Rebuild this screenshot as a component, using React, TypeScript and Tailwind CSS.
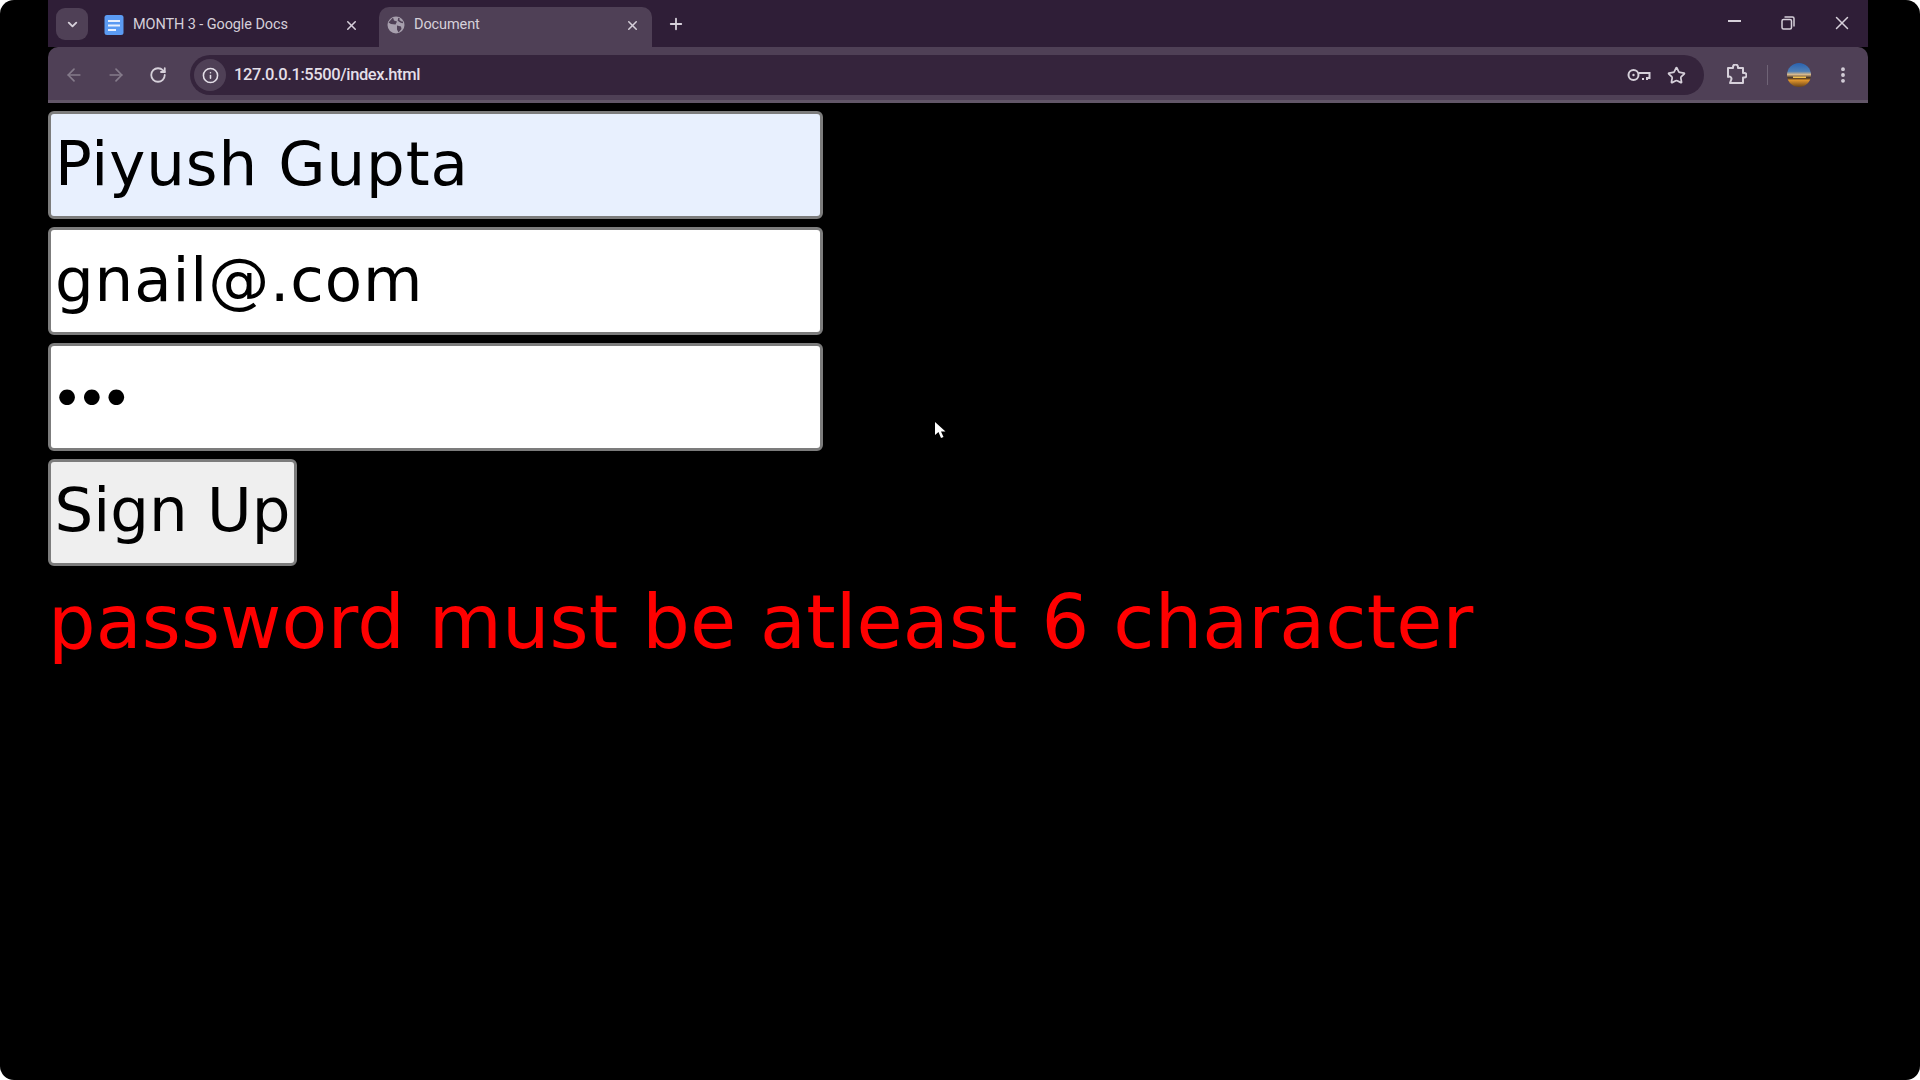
import React from 'react';
import { ArrowLeft, ArrowRight, ChevronDown, Info, MoreVertical, Plus, RotateCw, Star, X } from 'lucide-react';

const uiFont = "font-['Roboto','Noto_Sans',sans-serif]";
const pageFont = "font-['DejaVu_Sans','Inter',sans-serif]";

const DocsIcon = () => (
  <svg width="20" height="20" viewBox="0 0 20 20" className="shrink-0">
    <rect x="0.500" y="0" width="19" height="20" rx="2.500" fill="#5b9bf3" />
    <rect x="4" y="5" width="12" height="2" fill="#e8f0fe" />
    <rect x="4" y="9.500" width="12" height="2" fill="#e8f0fe" />
    <rect x="4" y="14" width="8" height="2" fill="#e8f0fe" />
  </svg>
);

const GlobeIcon = () => (
  <svg width="18" height="18" viewBox="0 0 18 18" className="shrink-0">
    <circle cx="9" cy="9" r="8.500" fill="#a8a0ae" />
    <path d="M6 1.500l1 3 3 1-1.500 3L4 8 1.500 6.500M10 9.500l4 1 .5 2.500-3 3.500-1.500-3z" fill="#4f4056" />
    <path d="M12 2l-.5 2.500L14 6l2 .5" fill="none" stroke="#4f4056" strokeWidth="1.500" />
  </svg>
);

const KeyIcon = () => (
  <svg width="24" height="14" viewBox="0 0 24 14" fill="none" stroke="#d6d0da" strokeWidth="2">
    <circle cx="6.500" cy="7" r="5" />
    <circle cx="6.500" cy="7" r="1.200" fill="#d6d0da" stroke="none" />
    <path d="M11.500 5h11v5h-2.500v2M16 10v2" />
  </svg>
);

const PuzzleIcon = () => (
  <svg width="22" height="22" viewBox="0 0 22 22" fill="none" stroke="#d6d0da" strokeWidth="2" strokeLinejoin="round">
    <path d="M3 4h5V3a2.400 2.400 0 0 1 5 0v1h5v5h1.200a2.300 2.300 0 0 1 0 4.600H18V19H5l1.500-4a2.200 2.200 0 0 0-3.500-2z" />
  </svg>
);

const RestoreIcon = () => (
  <svg width="14" height="14" viewBox="0 0 14 14" fill="none" stroke="#d6d0da" strokeWidth="1.500">
    <rect x="1" y="3.500" width="9.500" height="9.500" rx="1.500" />
    <path d="M3.500 1h8a1.500 1.500 0 0 1 1.500 1.500v8" />
  </svg>
);

// sunset photo, small enough that a few bands read the same
const Avatar = () => (
  <svg width="24" height="24" viewBox="0 0 24 24" className="shrink-0">
    <defs>
      <linearGradient id="sunset" x1="0" y1="0" x2="0" y2="1">
        <stop offset="0" stopColor="#2a63b0" />
        <stop offset="0.350" stopColor="#4f7fb5" />
        <stop offset="0.480" stopColor="#d9b98a" />
        <stop offset="0.620" stopColor="#3a2a20" />
        <stop offset="0.720" stopColor="#e0952c" />
        <stop offset="1" stopColor="#6b4418" />
      </linearGradient>
    </defs>
    <circle cx="12" cy="12" r="12" fill="url(#sunset)" />
    <rect x="6" y="13.500" width="13" height="1.500" fill="#f0c050" />
  </svg>
);

const Tab = ({ active, icon, label, width, closeGap }: { active?: boolean; icon: React.ReactNode; label: string; width: string; closeGap: string }) => (
  <div className={`${width} h-[40px] flex items-center pb-[4px] ${closeGap} ${active ? 'bg-[#4f4056] rounded-t-[10px] pl-[8px]' : 'pl-[16px]'}`}>
    {icon}
    <span className="ml-[9px] text-[14.500px] text-[#d6d0da] tracking-[-0.100px] whitespace-nowrap">{label}</span>
    <X size={15} strokeWidth={2.400} className="ml-auto text-[#d6d0da]" />
  </div>
);

const Field = ({ children, bg }: { children: React.ReactNode; bg: string }) => (
  <div className={`w-[775px] h-[108px] ${bg} border-[3px] border-[#7c7c7c] rounded-[6px] pl-[4px] pb-[2px] flex items-center text-[61px] tracking-[0.900px] text-black whitespace-nowrap`}>
    {children}
  </div>
);

export default function App() {
  return (
    <div className="w-[1920px] h-[1080px] bg-white overflow-hidden">
      <div className="relative w-full h-full bg-black rounded-[14px] pl-[48px] overflow-hidden">
        <div className={`w-[1820px] ${uiFont}`}>
          <div className="h-[47px] bg-[#2f1e37] flex items-end pl-[8px]">
            <div className="w-[32px] h-[32px] mb-[7px] rounded-[9px] bg-[#4f4056] flex items-center justify-center">
              <ChevronDown size={15} strokeWidth={3} className="text-[#d6d0da]" />
            </div>
            <Tab width="w-[291px]" closeGap="pr-[20px]" icon={<DocsIcon />} label="MONTH 3 - Google Docs" />
            <Tab active width="w-[273px]" closeGap="pr-[12px]" icon={<GlobeIcon />} label="Document" />
            <Plus size={18} strokeWidth={2.400} className="mb-[14px] ml-[15px] text-[#d6d0da]" />
            <div className="ml-auto flex items-center mb-[13px]">
              <div className="w-[13px] h-[2px] bg-[#d6d0da] mb-[4px]" />
              <div className="ml-[40px]"><RestoreIcon /></div>
              <X size={22} strokeWidth={1.600} className="ml-[36px] mr-[15px] text-[#d6d0da]" />
            </div>
          </div>
          <div className="h-[56px] pt-[3px] bg-[#4f4056] rounded-t-[10px] border-b-[3px] border-[#625668] flex items-center pl-[16px]">
            <ArrowLeft size={20} className="text-[#857b8b]" />
            <ArrowRight size={20} className="ml-[22px] text-[#857b8b]" />
            <RotateCw size={18} strokeWidth={2.400} className="ml-[23px] text-[#d6d0da]" />
            <div className="ml-[23px] w-[1514px] h-[40px] rounded-full bg-[#35243c] flex items-center pl-[4px] pr-[18px]">
              <div className="w-[32px] h-[32px] rounded-full bg-[#4f4056] flex items-center justify-center">
                <Info size={17} strokeWidth={2.200} className="text-[#e4dfe8]" />
              </div>
              <span className="ml-[8px] text-[16.500px] font-medium text-[#e4dfe8] tracking-[-0.400px]">127.0.0.1:5500/index.html</span>
              <div className="ml-auto flex items-center gap-[16px]">
                <KeyIcon />
                <Star size={19} strokeWidth={2.200} className="text-[#d6d0da]" />
              </div>
            </div>
            <div className="ml-[21px]"><PuzzleIcon /></div>
            <div className="ml-[20px] w-[1px] h-[20px] bg-[#6f6376]" />
            <div className="ml-[19px]"><Avatar /></div>
            <MoreVertical size={20} strokeWidth={2.600} className="ml-[22px] text-[#d6d0da]" />
          </div>
        </div>

        <div className={`pt-[8px] flex flex-col gap-[8px] items-start ${pageFont}`}>
          <Field bg="bg-[#e8f0fe]">Piyush Gupta</Field>
          <Field bg="bg-white">gnail@.com</Field>
          <Field bg="bg-white"><span className="font-['Inter'] text-[50px] tracking-[-3.500px] -ml-[2px] pb-[3px]">•••</span></Field>
          <button className="w-[249px] h-[107px] bg-[#efefef] border-[3px] border-[#7c7c7c] rounded-[6px] pb-[6px] text-[61px] text-black whitespace-nowrap flex items-center justify-center">
            Sign Up
          </button>
          <p className="text-[#ff0000] text-[75px] tracking-[0.100px] leading-[96px] whitespace-nowrap">password must be atleast 6 character</p>
        </div>

        <svg width="13" height="18" viewBox="0 0 13 18" className="absolute left-[934px] top-[421px]">
          <path d="M1 1v13l3.500-3 2.500 6 2.500-1-2.500-5.500h4.500z" fill="#fff" />
        </svg>
      </div>
    </div>
  );
}
